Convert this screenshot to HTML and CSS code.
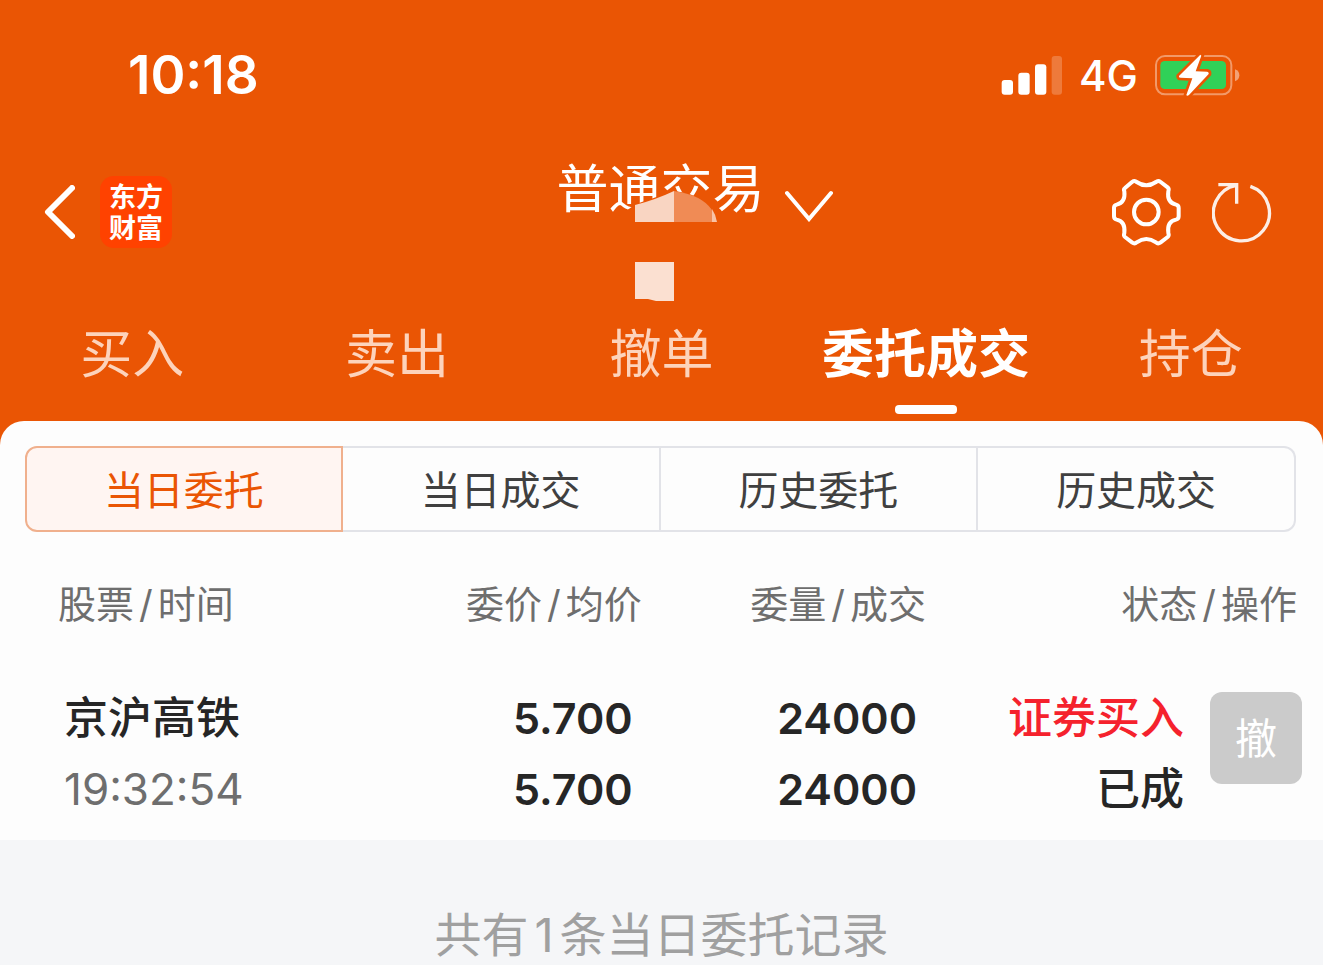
FILE: index.html
```html
<!DOCTYPE html>
<html lang="zh-CN">
<head>
    <meta charset="UTF-8">
    <meta name="viewport" content="width=device-width, initial-scale=1.0">
    <title>普通交易</title>
    <link rel="stylesheet" href="styles.css">
</head>
<body>
    <header class="header">
        <div class="status-bar">
            <span class="clock">10:18</span>
            <div class="status-icons">
                <svg width="62" height="41" viewBox="66 72 186 123" fill="#fff">
                    <rect x="68" y="147" width="34" height="44" rx="9"/>
                    <rect x="118" y="125" width="34" height="66" rx="9"/>
                    <rect x="168" y="100" width="34" height="91" rx="9"/>
                    <rect x="218" y="75" width="31" height="116" rx="9" opacity="0.22"/>
                </svg>
                <span class="network">4G</span>
                <svg width="86" height="42" viewBox="522 69 258 126">
                    <rect x="528" y="75" width="226" height="115" rx="27" fill="none" stroke="#fff" stroke-width="6" opacity="0.4"/>
                    <path d="M765 115 Q778 120 778 133 Q778 146 765 151Z" fill="#fff" opacity="0.45"/>
                    <rect x="541" y="90" width="197" height="84" rx="13" fill="#30d158"/>
                    <path class="bolt" d="M661 71 L597 135 Q596 140 602 140 L637 142 L619 192 Q621 196 627 192 L686 129 Q687 123 681 122 L647 121 L664 74Z"/>
                </svg>
            </div>
        </div>

        <nav class="nav">
            <div class="nav-left">
                <button class="icon-button" aria-label="返回">
                    <svg width="31" height="54" viewBox="0 0 31 54" fill="none" stroke="#fff" stroke-width="6" stroke-linecap="round" stroke-linejoin="round">
                        <path d="M28 3 L4 27 L28 51"/>
                    </svg>
                </button>
                <div class="logo"><span>东方</span><span>财富</span></div>
            </div>
            <div class="nav-center">
                <button class="title">
                    普通交易
                    <svg width="48" height="32" viewBox="0 0 48 32" fill="none" stroke="#fff" stroke-width="4" stroke-linecap="round">
                        <path d="M2 3 L24 29 L46 3"/>
                    </svg>
                </button>
                <div class="account">
                    <svg class="account-mask" width="110" height="112" viewBox="0 0 110 112">
                        <path d="M0 32 L26 14 L64 1 Q98 4 107 32Z" fill="#ea5504"/>
                        <path d="M25 32 V15 Q45 10 64 1 V32Z" fill="#f9d5c2"/>
                        <path d="M64 1 Q92 5 102 20 V32 H64Z" fill="#f08b55"/>
                        <path d="M102 19 Q106 25 107 32 H102Z" fill="#f9c3a6"/>
                        <path d="M25 72 H64 V111 H46 L38 109 H25Z" fill="#fbe0d1"/>
                    </svg>
                </div>
            </div>
            <div class="nav-right">
                <button class="icon-button" aria-label="设置">
                    <svg width="73" height="73" viewBox="0 0 219 219" fill="none" stroke="#fff" stroke-width="12" stroke-linejoin="round">
                        <path d="M45 36 L66 18 Q74 12 80 18 Q109 38 138 18 Q144 12 152 18 L173 34 Q178 38 175 46 Q170 80 198 86 Q206 88 206 96 V121 Q206 129 198 131 Q170 137 175 171 Q178 179 173 183 L152 199 Q144 205 138 199 Q109 179 80 199 Q74 205 66 199 L45 183 Q40 179 43 171 Q47 137 20 131 Q12 129 12 121 V96 Q12 88 20 86 Q47 80 43 46 Q40 40 45 36Z"/>
                        <circle cx="109" cy="108" r="37"/>
                    </svg>
                </button>
                <button class="icon-button" aria-label="刷新">
                    <svg width="63" height="63" viewBox="695 453 189 189" fill="none" stroke="#fff" stroke-width="10" opacity="0.9">
                        <path d="M810 469 A84 84 0 1 1 768 466"/>
                        <path d="M714 464 H769 V521"/>
                    </svg>
                </button>
            </div>
        </nav>

        <div class="tabs">
            <button class="tab">买入</button>
            <button class="tab">卖出</button>
            <button class="tab">撤单</button>
            <button class="tab active">委托成交</button>
            <button class="tab">持仓</button>
        </div>
    </header>

    <main class="orders">
        <div class="segments">
            <button class="segment selected">当日委托</button>
            <button class="segment">当日成交</button>
            <button class="segment">历史委托</button>
            <button class="segment">历史成交</button>
        </div>

        <table class="order-table">
            <colgroup>
                <col class="col-stock">
                <col class="col-price">
                <col class="col-amount">
                <col class="col-state">
                <col class="col-action">
            </colgroup>
            <thead>
                <tr>
                    <th>股票<span class="slash">/</span>时间</th>
                    <th>委价<span class="slash">/</span>均价</th>
                    <th>委量<span class="slash">/</span>成交</th>
                    <th colspan="2">状态<span class="slash">/</span>操作</th>
                </tr>
            </thead>
            <tbody>
                <tr>
                    <td><div>京沪高铁</div><div class="time">19:32:54</div></td>
                    <td class="number"><div>5.700</div><div>5.700</div></td>
                    <td class="number"><div>24000</div><div>24000</div></td>
                    <td><div class="buy">证券买入</div><div>已成</div></td>
                    <td><button class="cancel" disabled>撤</button></td>
                </tr>
            </tbody>
        </table>
    </main>

    <footer class="summary">共有<span class="count">1</span>条当日委托记录</footer>
</body>
</html>
```

FILE: styles.css
```css
* {
    box-sizing: border-box;
}
body {
    margin: 0;
    background-color: #f5f6f8;
    font-family: Inter, "Noto Sans CJK SC", sans-serif;
    color: #262626;
}
button {
    margin: 0;
    padding: 0;
    border: none;
    background: none;
    color: inherit;
    font: inherit;
    cursor: pointer;
}
svg {
    display: block;
}

/* header */
.header {
    background-color: #ea5504;
    color: #fff;
    padding: 43px 0 24px;
}
.status-bar {
    display: flex;
    justify-content: space-between;
    align-items: center;
    height: 64px;
    padding: 0 83px 0 128px;
}
.clock {
    font-size: 53px;
    font-weight: 600;
}
.status-icons {
    display: flex;
    align-items: center;
    gap: 16px;
}
.network {
    font-size: 42px;
    font-weight: 500;
}
.bolt {
    fill: #fff;
    stroke: #ea5504;
    stroke-width: 16px;
    paint-order: stroke;
}
.nav {
    display: grid;
    grid-template-columns: 1fr auto 1fr;
    align-items: center;
    height: 210px;
    padding: 0 48px 0 44px;
}
.nav-left {
    display: flex;
    align-items: center;
    gap: 25px;
}
.nav-right {
    display: flex;
    justify-content: flex-end;
    align-items: center;
    gap: 29px;
}
.logo {
    display: flex;
    flex-direction: column;
    align-items: center;
    justify-content: center;
    width: 72px;
    height: 72px;
    padding-top: 2px;
    border-radius: 14px;
    background-color: #ff4200;
    font-size: 27px;
    font-weight: 700;
    line-height: 31px;
}
.nav-center {
    position: relative;
}
.title {
    display: flex;
    align-items: flex-end;
    gap: 20px;
    padding-left: 70px;
    font-size: 52px;
    line-height: 64px;
}
.account {
    height: 44px;
}
.account-mask {
    position: absolute;
    top: 32px;
    left: 124px;
}
.tabs {
    display: grid;
    grid-template-columns: repeat(5, 1fr);
    height: 104px;
    padding-top: 2px;
}
.tab {
    display: flex;
    flex-direction: column;
    align-items: center;
    color: #fdd3bb;
    font-size: 52px;
    line-height: 72px;
}
.tab.active {
    color: #fff;
    font-weight: 700;
}
.tab.active::after {
    content: "";
    width: 62px;
    height: 9px;
    margin-top: 14px;
    border-radius: 4px;
    background-color: #fff;
}

/* order list */
.orders {
    margin-top: -24px;
    padding-top: 25px;
    border-radius: 24px 24px 0 0;
    background-color: #fdfdfd;
}
.segments {
    display: grid;
    grid-template-columns: repeat(4, 1fr);
    margin: 0 27px 0 25px;
}
.segment {
    height: 86px;
    padding-bottom: 3px;
    border: 2px solid #e2e3e8;
    border-left-width: 0;
    color: #404040;
    font-size: 40px;
}
.segment:last-child {
    border-radius: 0 12px 12px 0;
}
.segment.selected {
    border: 2px solid #f0b08d;
    border-radius: 12px 0 0 12px;
    background-color: #fff5f2;
    color: #ea5504;
}
.order-table {
    width: 100%;
    margin-top: 40px;
    border-collapse: collapse;
    table-layout: fixed;
}
.col-stock {
    width: 26%;
}
.col-price {
    width: 22.5%;
}
.col-amount {
    width: 21.5%;
}
.col-state {
    width: 19.5%;
}
th {
    padding: 0;
    color: #6e6e6e;
    font-size: 38px;
    font-weight: 400;
    line-height: 64px;
    text-align: right;
    white-space: nowrap;
}
th:first-child {
    padding-left: 58px;
    text-align: left;
}
th:last-child {
    padding-right: 26px;
}
.slash {
    margin: 0 5px;
}
td {
    padding: 47px 0 15px;
    font-size: 44px;
    font-weight: 500;
    line-height: 71px;
    text-align: right;
    white-space: nowrap;
}
td:first-child {
    padding-left: 64px;
    text-align: left;
}
td:last-child {
    padding-right: 21px;
    vertical-align: top;
}
.number {
    padding-right: 9px;
    font-size: 43px;
    font-weight: 600;
}
.time {
    color: #6e6e6e;
    font-weight: 400;
}
.buy {
    color: #f5222d;
}
.cancel {
    display: block;
    width: 92px;
    height: 92px;
    margin: 9px 0 0 auto;
    border-radius: 12px;
    background-color: #cbcbcb;
    color: #fff;
    font-size: 42px;
    font-weight: 400;
    cursor: default;
}

.summary {
    padding-top: 65px;
    color: #a0a0a0;
    font-size: 47px;
    line-height: 60px;
    text-align: center;
}
.count {
    margin: 0 6px;
}
```
